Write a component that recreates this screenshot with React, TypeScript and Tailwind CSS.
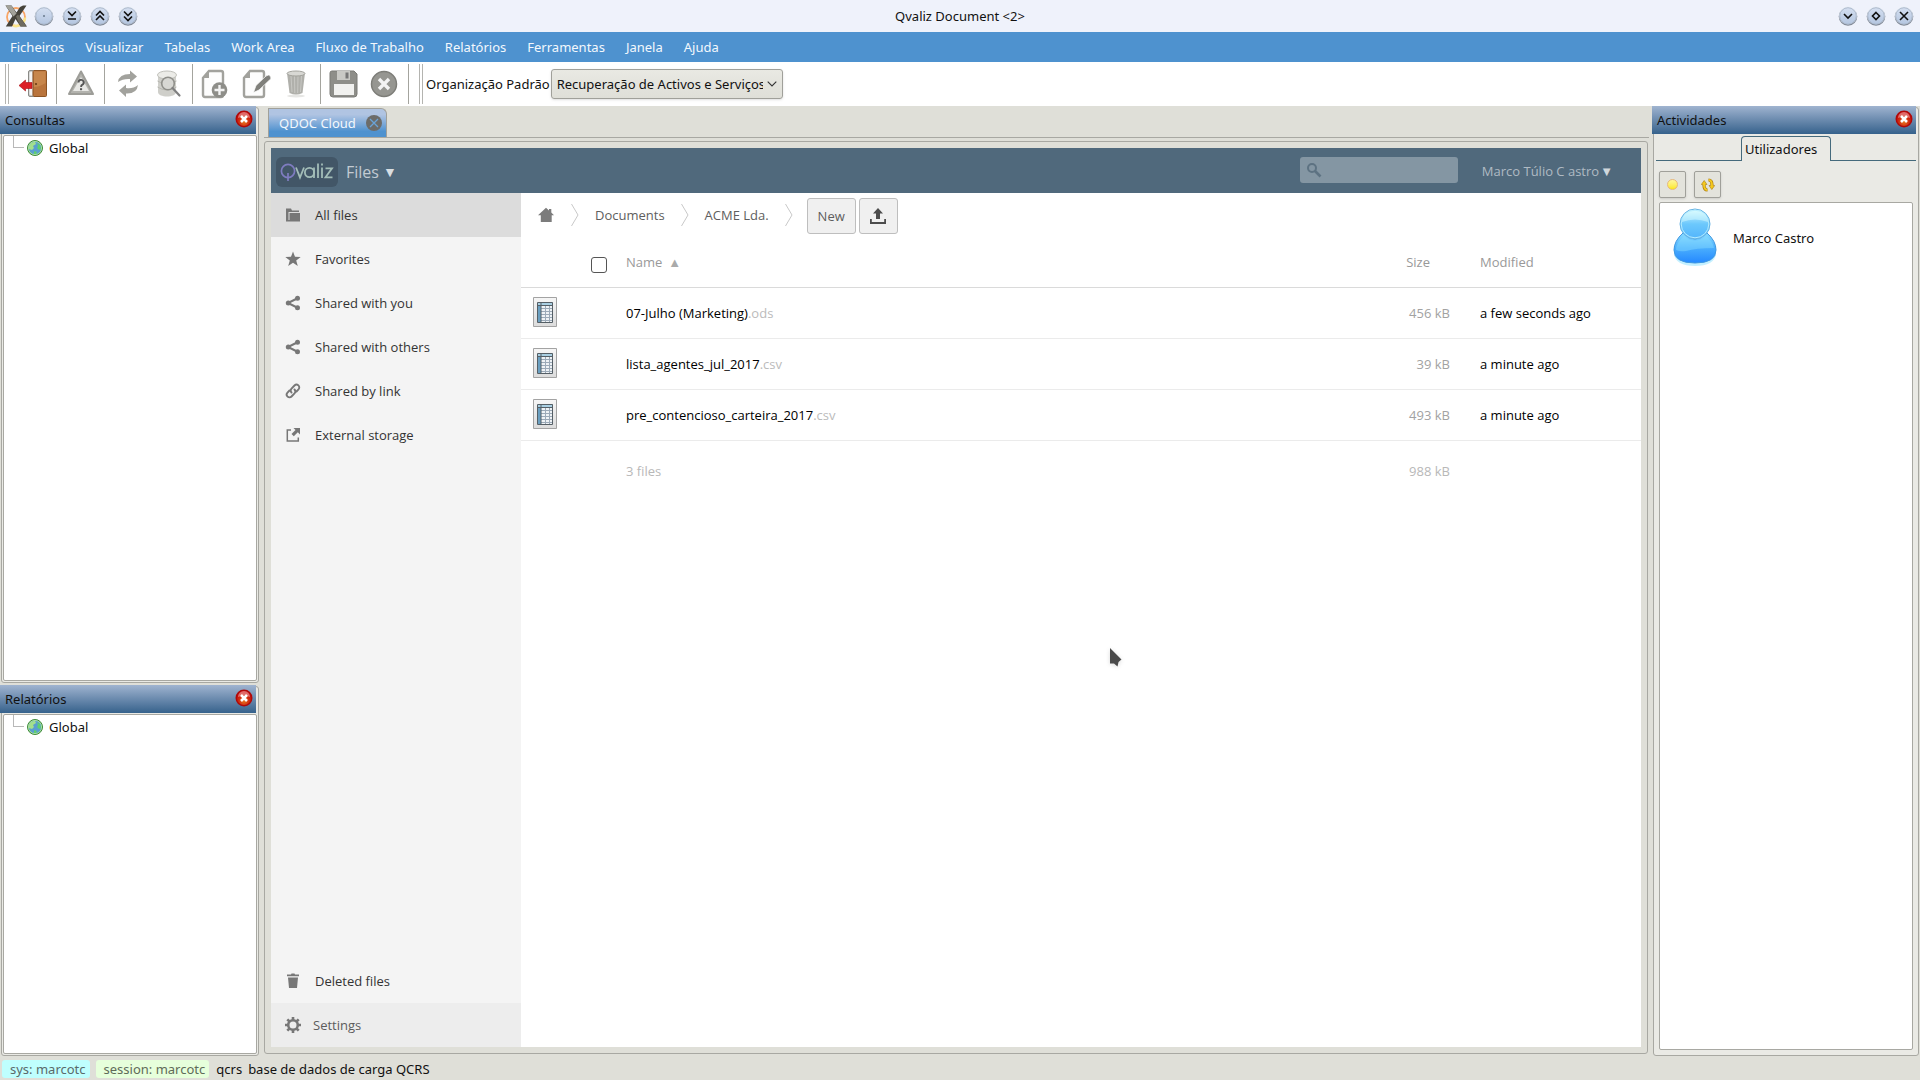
import React from 'react';

const dockFrame = 'rounded-[3px] border border-[#a8a8a2]';

function DockClose({ label }: { label: string }) {
  return (
    <button aria-label={label} className="h-4.5 w-4.5 self-start mt-1">
      <svg viewBox="0 0 18 18" className="h-full w-full">
        <defs>
          <radialGradient id="red" cx="50%" cy="70%" r="60%">
            <stop offset="0" stopColor="#e8781c" />
            <stop offset="0.6" stopColor="#cf2d10" />
            <stop offset="1" stopColor="#c80c0c" />
          </radialGradient>
        </defs>
        <circle cx="9" cy="9" r="8.5" fill="#b00808" />
        <circle cx="9" cy="9" r="7" fill="url(#red)" />
        <path d="M3 8a6 6 0 0 1 12 0q-6-3-12 0z" fill="#f0a8a8" opacity=".6" />
        <path d="M6 6l6 6M12 6l-6 6" stroke="#fff" strokeWidth="2.6" />
      </svg>
    </button>
  );
}

function DockHeader({ title }: { title: string }) {
  return (
    <header className="flex h-7 items-center justify-between bg-linear-to-b from-[#a0b4d0] to-[#36628c] pl-[5px] pr-[3px]">
      <h2>{title}</h2>
      <DockClose label={`Fechar ${title}`} />
    </header>
  );
}

function Globe() {
  return (
    <svg viewBox="0 0 16 16" className="h-4 w-4">
      <circle cx="8" cy="8" r="7.5" fill="#57a85a" stroke="#3e8a3a" />
      <circle cx="8" cy="8" r="6.4" fill="#5a9fd0" />
      <path d="M2 6q2-4 6-4.3L9 4 6 6l1 2-2 2-3-1z" fill="#a4e08c" />
      <path d="M10 3l3 2 1 4-2 1-2-2 1-2zM7 11l3 1-1 2.300H7z" fill="#5ed070" />
      <circle cx="8" cy="8" r="6.600" fill="none" stroke="#b8e8b0" strokeWidth=".8" />
    </svg>
  );
}

function TreeDock({ title, className }: { title: string; className: string }) {
  return (
    <section className={`flex flex-col ${className}`}>
      <div className="relative mr-[3px]"><DockHeader title={title} /></div>
      <div className="-mt-[27px] ml-px flex flex-1 flex-col rounded-[3px] border border-[#a8a8a2] bg-[#eaeae5] px-px pb-px pt-[27px]">
        <ul className="flex-1 rounded-[2px] border border-[#a8a8a2] bg-white pl-[9px]">
          <li className="flex h-6 items-center">
            <span className="mb-3 h-3 w-[11px] border-b border-l border-[#b8b8b8]" />
            <button className="ml-[3px] flex items-center gap-[6px]">
              <Globe />
              Global
            </button>
          </li>
        </ul>
      </div>
    </section>
  );
}

function WinButton({ label, children }: { label: string; children: React.ReactNode }) {
  return (
    <button aria-label={label} className="h-5 w-5">
      <svg viewBox="0 0 20 20" className="h-full w-full">
        <defs>
          <linearGradient id="win" x1="0" y1="0" x2="0" y2="1">
            <stop offset="0" stopColor="#d4dff0" />
            <stop offset="1" stopColor="#b4c6e0" />
          </linearGradient>
        </defs>
        <circle cx="10" cy="10.500" r="9.300" fill="#7f8794" />
        <circle cx="10" cy="9.500" r="9" fill="#e9eff8" />
        <circle cx="10" cy="10" r="8.300" fill="url(#win)" stroke="#98a6ba" strokeWidth=".7" />
        <g fill="none" stroke="#111" strokeWidth="1.600">{children}</g>
      </svg>
    </button>
  );
}

function Logo() {
  return (
    <svg viewBox="0 0 24 24" className="h-6 w-6">
      <circle cx="12" cy="13" r="9" fill="none" stroke="#f9a566" strokeWidth="1.800" />
      <path d="M9 21.500a9 9 0 0 0 12-8" stroke="#fbe58c" strokeWidth="2.600" fill="none" />
      <path d="M1.500 1.500h6l5 7 3.500-5.500 3-1.500h3.500L15.500 12l7.500 10.500h-6.500L11.500 15 8 22.500H1.800L8.500 12z" fill="#45423a" />
      <path d="M1.500 1.500h6l5 8-3 3z" fill="#a3a29a" />
      <path d="M12 12.500l2-2 8.500 12h-6z" fill="#6e6b60" />
    </svg>
  );
}

const ToolSep = () => <span className="h-10 w-px bg-[#a4a49e]" />;
const Handle = () => <span className="h-10 w-1 border-x border-[#b4b4b0]" />;

function Tool({ label, children }: { label: string; children: React.ReactNode }) {
  return (
    <button aria-label={label} className="h-8 w-8">
      <svg viewBox="0 0 32 32" className="h-full w-full">{children}</svg>
    </button>
  );
}

const menus = ['Ficheiros', 'Visualizar', 'Tabelas', 'Work Area', 'Fluxo de Trabalho', 'Relatórios', 'Ferramentas', 'Janela', 'Ajuda'];

function Toolbar() {
  return (
    <div className="flex h-11 items-center bg-white">
      <div className="flex items-center pl-[5px]">
        <Handle />
        <div className="flex w-[47px] justify-center">
          <Tool label="Sair">
            <path d="M11.500 4q0-1.500 1.500-1.500h5v26h-5q-1.500 0-1.500-1.500z" fill="#c4c5c2" stroke="#8a8a86" />
            <path d="M12.500 4.500l3-1v24l-3-1z" fill="#f4f4f4" />
            <path d="M16 3.500l1-1h11.500q1 0 1 1v24q0 1-1 1H17l-1-1z" fill="#b9743c" stroke="#8c5424" />
            <path d="M17 3.500h11.500V15q-6 4-11.500 4z" fill="#cb8b4f" opacity=".8" />
            <circle cx="19" cy="16" r="1.100" fill="#6c3b15" />
            <path d="M2 17.500L8.500 12v2.500h6.500v6H8.500V23z" fill="#dc2026" stroke="#a80f14" strokeWidth=".6" />
          </Tool>
        </div>
        <ToolSep />
        <div className="flex w-[47px] justify-center">
          <Tool label="Ajuda">
            <path d="M16 3.500L28 26H4z" fill="#b3b3ae" stroke="#9d9d98" strokeWidth="2" strokeLinejoin="round" />
            <path d="M16 9l8 14H8z" fill="#e8e8e5" />
            <path d="M13.500 14.500a2.600 2.600 0 1 1 3.600 2.400q-1 .5-1 2" fill="none" stroke="#555" strokeWidth="1.900" />
            <path d="M15 20.200h2.100v2H15z" fill="#555" />
          </Tool>
        </div>
        <ToolSep />
        <div className="flex w-[87px] justify-between pl-[7px] pr-2">
          <Tool label="Actualizar">
            <path d="M6 14q1-8 12-8V2.500l7 6-7 6V11q-7-.5-12 3z" fill="#a2a29d" />
            <path d="M26 17q-1 9-12 8.500V29l-7-6.500 7-6V20q7 1 12-3z" fill="#a2a29d" />
          </Tool>
          <Tool label="Pesquisar base de dados">
            <path d="M6 7v17c0 6 18 6 18 0V7z" fill="#cfcfca" />
            <ellipse cx="15" cy="7" rx="9.500" ry="4" fill="#ecece8" stroke="#c0c0ba" />
            <path d="M5.500 13q9 6 19 0M5.500 19q9 6 19 0" fill="none" stroke="#b8b8b2" />
            <circle cx="16" cy="15.500" r="6.300" fill="#d7d7d3" stroke="#8f8f8a" strokeWidth="1.600" />
            <path d="M20.500 20l7 7.500" stroke="#808080" strokeWidth="2.200" strokeLinecap="round" />
          </Tool>
        </div>
        <ToolSep />
        <div className="flex w-[127px] justify-between pl-[5px] pr-2">
          <Tool label="Novo">
            <path d="M11 3h12q2 0 2 2v22q0 2-2 2H7q-2 0-2-2V10z" fill="#fdfdfd" stroke="#a2a29d" strokeWidth="2.400" />
            <path d="M11 3v7H5z" fill="#a2a29d" />
            <circle cx="21.500" cy="22" r="7.800" fill="#8e8e89" />
            <path d="M21.500 17v10M16.500 22h10" stroke="#f3f3f3" strokeWidth="2.400" />
          </Tool>
          <Tool label="Editar">
            <path d="M11 3h12q2 0 2 2v22q0 2-2 2H7q-2 0-2-2V10z" fill="#fdfdfd" stroke="#a2a29d" strokeWidth="2.400" />
            <path d="M11 3v7H5z" fill="#a2a29d" />
            <path d="M14.500 24.500l2.500-7L27 8q3-2 4.500.5T30 12.500L20 22z" fill="#80807b" stroke="#fff" strokeWidth=".7" />
          </Tool>
          <Tool label="Eliminar">
            <ellipse cx="16" cy="28" rx="9" ry="1.500" fill="#e6e6e4" />
            <path d="M7 5h18l-2.500 20q-6.500 3-13 0z" fill="#b0b0ab" />
            <path d="M11 8l1 16M14.500 8l.3 17M18 8l-.3 17M21.500 8l-1 16" stroke="#c8c8c4" />
            <ellipse cx="16" cy="5.500" rx="9" ry="2.500" fill="#d8d8d4" stroke="#a4a49e" />
          </Tool>
        </div>
        <ToolSep />
        <div className="flex w-[87px] justify-between pl-[7px] pr-2">
          <Tool label="Guardar">
            <path d="M4 3h22l3 3v20q0 3-3 3H5q-3 0-3-3V5q0-2 2-2z" fill="#8e8e89" stroke="#7b7b76" />
            <path d="M9 3h13v9H9z" fill="#c9c9c5" />
            <path d="M17.500 4.500h3v6h-3z" fill="#777" />
            <path d="M6 16h20v11H6z" fill="#f1f1ef" />
          </Tool>
          <Tool label="Cancelar">
            <circle cx="16" cy="16" r="12.500" fill="#969691" stroke="#7d7d78" strokeWidth="1.500" />
            <path d="M11 11l10 10M21 11L11 21" stroke="#f3f3f3" strokeWidth="3.400" />
          </Tool>
        </div>
        <ToolSep />
      </div>
      <div className="ml-[10px] flex items-center">
        <Handle />
        <label htmlFor="org" className="ml-[3px] mr-px">Organização Padrão</label>
        <div className="relative">
          <select id="org" className="h-[30px] w-[232px] appearance-none rounded-[3px] border border-[#a0a09a] bg-linear-to-b from-[#e9e9e3] to-[#dfdfd8] pl-[5px] pr-[19px] shadow-sm">
            <option>Recuperação de Activos e Serviços</option>
          </select>
          <svg viewBox="0 0 10 6" className="pointer-events-none absolute right-[6px] top-3 h-[6px] w-[10px]">
            <path d="M.7.700L5 5 9.300.700" fill="none" stroke="#333" strokeWidth="1.100" />
          </svg>
        </div>
      </div>
    </div>
  );
}

const Share = () => (
  <>
    <path d="M13 3L3 8l10 5" fill="none" stroke="#777" strokeWidth="2" />
    <circle cx="12.500" cy="3.300" r="2.500" />
    <circle cx="3.300" cy="8" r="2.500" />
    <circle cx="12.500" cy="12.700" r="2.500" />
  </>
);

const navItems = [
  { label: 'All files', icon: <path d="M1 1.500h5l1 2h7v1.500H3.500V14H1zM4.500 6H15v8.500H4.500zM1 13h12v1.500H1z" />, on: true },
  { label: 'Favorites', icon: <path d="M8 .5l2 5.300 5.700.200-4.500 3.500L12.800 15 8 11.800 3.200 15l1.600-5.500L.3 6l5.700-.2z" /> },
  { label: 'Shared with you', icon: <Share /> },
  { label: 'Shared with others', icon: <Share /> },
  {
    label: 'Shared by link',
    icon: (
      <g fill="none" stroke="#777" strokeWidth="1.900" strokeLinecap="round">
        <path d="M6.500 9.500a2.800 2.800 0 0 1 0-3.800l3-3.200a2.700 2.700 0 0 1 4 3.800L11.500 8.500" />
        <path d="M9.500 6.500a2.800 2.800 0 0 1 0 3.800l-3 3.200a2.700 2.700 0 0 1-4-3.800L4.500 7.500" />
      </g>
    ),
  },
  {
    label: 'External storage',
    icon: (
      <>
        <path d="M6 3H2.300v11h11v-3.500" fill="none" stroke="#777" strokeWidth="1.500" />
        <path d="M8.500 1H15v6.500l-2.200-2.200-4 4L6.500 7l4-4z" />
      </>
    ),
  },
];

function NavIcon({ children }: { children: React.ReactNode }) {
  return <svg viewBox="0 0 16 16" className="h-4 w-4" fill="#777">{children}</svg>;
}

function SheetIcon() {
  return (
    <svg viewBox="0 0 24 30" className="mb-[2px] h-[30px] w-6">
      <defs>
        <linearGradient id="sheet" x1="0" y1="0" x2="0" y2="1">
          <stop offset="0" stopColor="#f6f6f6" />
          <stop offset="1" stopColor="#dcdcdc" />
        </linearGradient>
      </defs>
      <path d="M.5.500h23v29H.500z" fill="url(#sheet)" stroke="#a3a3a3" />
      <path d="M4.500 5.500h15v20h-15z" fill="#eef2f5" />
      <path d="M5 5h15v3H5z" fill="#a9cfe2" />
      <path d="M5 8h3v17H5z" fill="#6a9fc0" />
      <path d="M12.500 8v17M16.500 8v17M8 11.500h11M8 14.500h11M8 17.500h11M8 20.500h11M8 23.500h11" stroke="#8899aa" strokeWidth="1" opacity=".8" />
      <path d="M4.500 5.500h15v20h-15zM4.500 8.500h15M8 5.500v20" fill="none" stroke="#555f66" />
    </svg>
  );
}

const files = [
  { name: '07-Julho (Marketing)', ext: '.ods', size: '456 kB', when: 'a few seconds ago' },
  { name: 'lista_agentes_jul_2017', ext: '.csv', size: '39 kB', when: 'a minute ago' },
  { name: 'pre_contencioso_carteira_2017', ext: '.csv', size: '493 kB', when: 'a minute ago' },
];

const Chevron = () => (
  <svg viewBox="0 0 8 22" className="h-[22px] w-2">
    <path d="M.5 0L7 11 .5 22" fill="none" stroke="#c8c8c8" />
  </svg>
);

function FileTable() {
  return (
    <table className="w-full table-fixed border-collapse text-left">
      <colgroup>
        <col className="w-[70px]" />
        <col className="w-[35px]" />
        <col />
        <col className="w-20" />
        <col className="w-[191px]" />
      </colgroup>
      <thead>
        <tr className="h-[50px] border-b border-[#dadada] text-[#999]">
          <th />
          <th className="align-middle">
            <input type="checkbox" aria-label="Select all" className="mt-[6px] block h-4 w-4 appearance-none rounded-[3px] border border-[#555] bg-white" />
          </th>
          <th className="font-normal">
            <button className="flex items-center gap-[6px]">Name <span className="text-[13px] text-[#aaa]">▲</span></button>
          </th>
          <th className="pr-5 text-right font-normal">Size</th>
          <th className="pl-[30px] font-normal">Modified</th>
        </tr>
      </thead>
      <tbody>
        {files.map((f) => (
          <tr key={f.name} className="h-[51px] border-b border-[#ebebeb]">
            <td className="pl-3"><SheetIcon /></td>
            <td />
            <td><a href="#file" className="text-black">{f.name}<span className="text-[#bbb]">{f.ext}</span></a></td>
            <td className="text-right text-[#a2a2a2]">{f.size}</td>
            <td className="pl-[30px] text-black">{f.when}</td>
          </tr>
        ))}
      </tbody>
      <tfoot>
        <tr className="h-[62px] text-[#b8b8b8]">
          <td />
          <td />
          <td>3 files</td>
          <td className="text-right">988 kB</td>
          <td />
        </tr>
      </tfoot>
    </table>
  );
}

function Cloud() {
  return (
    <div className="flex flex-1 flex-col bg-white font-['Open_Sans',sans-serif]">
      <header className="flex h-[45px] items-center bg-[#50697c] pl-[5px] pr-7">
        <a href="#home" className="mt-[3px] flex h-[30px] w-[62px] items-center justify-center rounded-[6px] bg-[#425667]" aria-label="Qvaliz">
          <svg viewBox="0 0 54 24" className="h-6 w-[54px]">
            <circle cx="8" cy="11" r="6.600" fill="none" stroke="#7f7cc0" strokeWidth="1.700" />
            <path d="M8 13v8" stroke="#7f7cc0" strokeWidth="1.700" />
            <g fill="none" stroke="#a3bdb8" strokeWidth="1.800">
              <path d="M16 7.500l4 10 4-10" />
              <circle cx="29.500" cy="12.500" r="4.600" />
              <path d="M34 7.500v10.500M38 3.500v14.500M42 7.500V18M42 3.500v2M45.500 8.300h6.500l-6.500 9h7" />
            </g>
          </svg>
        </a>
        <button className="ml-2 mt-[2px] flex items-center gap-1 text-base text-[#c3cbd2]">Files <span className="text-sm text-[#d8dee2]">▼</span></button>
        <div className="relative mb-[2px] ml-auto">
          <input type="search" aria-label="Search" className="block h-[26px] w-[158px] rounded-[3px] bg-[#8496a3] pl-7" />
          <svg viewBox="0 0 16 16" className="pointer-events-none absolute left-[6px] top-[5px] h-4 w-4">
            <circle cx="6" cy="6" r="4" fill="none" stroke="#5d7282" strokeWidth="2" />
            <path d="M9 9l5.500 5.500" stroke="#5d7282" strokeWidth="2.600" />
          </svg>
        </div>
        <button className="ml-6 flex items-center gap-px text-[#afbac3]">Marco Túlio C astro <span className="text-[13px] text-[#d0d7dc]">▼</span></button>
      </header>
      <div className="flex flex-1">
        <nav className="flex w-[250px] flex-col bg-[#f4f4f4] text-[#333]">
          {navItems.map((n) => (
            <a key={n.label} href="#nav" className={`flex h-11 items-center gap-[14px] pl-[14px] ${n.on ? 'bg-[#dcdcdc]' : ''}`}>
              <NavIcon>{n.icon}</NavIcon>
              {n.label}
            </a>
          ))}
          <a href="#deleted" className="mt-auto flex h-11 items-center gap-[14px] pl-[14px]">
            <NavIcon><path d="M2 1.500h4l.5-1h3l.500 1h4v1.800H2zM3 4.500h10l-1 10.500H4z" /></NavIcon>
            Deleted files
          </a>
          <button className="flex h-11 items-center gap-3 bg-[#ededed] pl-[14px] text-[#5c5c5c]">
            <NavIcon>
              <circle cx="8" cy="8" r="4.800" fill="none" stroke="#777" strokeWidth="2.600" />
              <path d="M8 0v3M8 13v3M0 8h3M13 8h3M2.300 2.300l2.200 2.200M11.500 11.500l2.200 2.200M13.700 2.300l-2.200 2.200M4.500 11.500l-2.200 2.200" stroke="#777" strokeWidth="2.600" />
            </NavIcon>
            Settings
          </button>
        </nav>
        <main className="flex-1">
          <div className="flex h-11 items-center pl-[17px] text-[#5e5e5e]">
            <a href="#root" aria-label="Home">
              <svg viewBox="0 0 16 16" className="h-4 w-4" fill="#7c7c7c"><path d="M8 .8l3 2.600V2h2.300v3.500L16 8.200h-2.300V15H2.800V8.200H0z" /></svg>
            </a>
            <span className="ml-[17px] flex"><Chevron /></span>
            <a href="#documents" className="ml-4">Documents</a>
            <span className="ml-4 flex"><Chevron /></span>
            <a href="#acme" className="ml-4">ACME Lda.</a>
            <span className="ml-4 flex"><Chevron /></span>
            <button className="ml-[14px] mt-[2px] h-9 w-[49px] rounded-[3px] border border-[#bebebe] bg-[#f0f0f0]">New</button>
            <button aria-label="Upload" className="ml-[3px] mt-[2px] flex h-9 w-[39px] items-center justify-center rounded-[3px] border border-[#bebebe] bg-[#f0f0f0]">
              <svg viewBox="0 0 16 16" className="h-4 w-4" fill="#4c4c4c"><path d="M8 0l5 5.500h-3V11H6V5.500H3zM0 11h1.800v3h12.400v-3H16v5H0z" /></svg>
            </button>
          </div>
          <FileTable />
        </main>
      </div>
    </div>
  );
}

function Activities() {
  return (
    <aside className="mr-px flex w-[267px] flex-col">
      <div className="relative mr-[3px]"><DockHeader title="Actividades" /></div>
      <div className={`-mt-[27px] ml-px flex flex-1 flex-col bg-[#eaeae5] px-[2px] pt-[28px] ${dockFrame}`}>
        <div role="tablist" className="flex h-[25px] items-end">
          <span className="h-px w-[85px] bg-[#456a7c]" />
          <button role="tab" aria-selected="true" className="h-full w-[90px] rounded-t-[4px] border-x border-t border-[#456a7c] pl-[3px] text-left">Utilizadores</button>
          <span className="h-px flex-1 bg-[#456a7c]" />
        </div>
        <div className="mt-[10px] flex gap-2 pl-[3px]">
          <button aria-label="Estado" className="flex h-[27px] w-[27px] items-center justify-center rounded-[2px] border border-[#a0a09a] bg-[#e3e3dc] shadow-sm">
            <span className="h-[11px] w-[11px] rounded-full border border-[#e8b878] bg-linear-to-b from-[#fff79a] to-[#fce803]" />
          </button>
          <button aria-label="Actualizar" className="flex h-[27px] w-[27px] items-center justify-center rounded-[2px] border border-[#a0a09a] bg-[#e3e3dc] shadow-sm">
            <svg viewBox="0 0 14 14" className="h-[14px] w-[14px]" fill="none">
              <path d="M6.500 12q-3.500 0-3.500-5M7.500 2q3.500 0 3.500 5" stroke="#a87a10" strokeWidth="3.200" />
              <path d="M6 6.500H.3L3.200 2.500zM8 7.500h5.700L10.800 11.500z" fill="#f4c81c" stroke="#a87a10" strokeWidth=".6" />
              <path d="M6.300 12Q3 12 3 6M7.700 2Q11 2 11 8" stroke="#f4c81c" strokeWidth="2" />
            </svg>
          </button>
        </div>
        <ul className="mx-[3px] mb-[5px] mt-1 flex-1 rounded-[2px] border border-[#a8a8a2] bg-white">
          <li className="flex items-center gap-4 pl-[13px] pt-[5px]">
            <svg viewBox="0 0 44 60" className="h-[60px] w-11">
              <defs>
                <linearGradient id="head" x1="0" y1="0" x2="0" y2="1">
                  <stop offset="0" stopColor="#d9fbff" />
                  <stop offset=".5" stopColor="#6cc8fc" />
                  <stop offset="1" stopColor="#52b4fc" />
                </linearGradient>
                <linearGradient id="body" x1="0" y1="0" x2="0" y2="1">
                  <stop offset="0" stopColor="#8adcff" />
                  <stop offset=".5" stopColor="#4aaefd" />
                  <stop offset="1" stopColor="#2488ff" />
                </linearGradient>
              </defs>
              <path d="M9 28q13 10 26 0 8 8 8 16 0 14-21 14T1 44q0-8 8-16z" fill="#c4f0ff" />
              <path d="M10 25q12 12 24 0 9 8 9 17 0 13-21 13T1 42q0-9 9-17z" fill="url(#body)" stroke="#3f97e0" />
              <path d="M3 42q0-7 8-14 11 9 22 0 7 6 8 12-18 0-28 3-6 1-10-1z" fill="#8fe0ff" opacity=".4" />
              <circle cx="22" cy="16" r="15" fill="url(#head)" stroke="#68b4e4" />
              <circle cx="22" cy="16" r="13.800" fill="none" stroke="#b4ecff" strokeWidth="1" />
              <path d="M9 14q13-5 26 0-1-11-13-11T9 14z" fill="#e0ffff" opacity=".45" />
            </svg>
            Marco Castro
          </li>
        </ul>
      </div>
    </aside>
  );
}

export default function App() {
  return (
    <div className="relative flex min-h-screen flex-col bg-[#dfdfd8] font-['Noto_Sans',sans-serif] text-[13px] leading-[18px] text-[#111]">
      <header className="grid h-8 grid-cols-[1fr_auto_1fr] items-center bg-[#eff2fb] px-[6px]">
        <div className="flex items-center">
          <span className="-ml-[2px]"><Logo /></span>
          <div className="ml-[6px] flex gap-2">
            <WinButton label="Menu"><path d="M9.300 10h1.400" stroke="#456" /></WinButton>
            <WinButton label="Manter abaixo"><path d="M6 5.500l4 4 4-4M6 13h8" /></WinButton>
            <WinButton label="Manter acima"><path d="M6 9.500l4-4 4 4M6 14l4-4 4 4" /></WinButton>
            <WinButton label="Enrolar"><path d="M6 5.500l4 4 4-4M6 10.500l4 4 4-4" /></WinButton>
          </div>
        </div>
        <h1>Qvaliz Document &lt;2&gt;</h1>
        <div className="flex justify-end gap-2">
          <WinButton label="Minimizar"><path d="M6 8l4 4 4-4" /></WinButton>
          <WinButton label="Maximizar"><path d="M10 6.500l3.500 3.500-3.500 3.500L6.500 10z" /></WinButton>
          <WinButton label="Fechar"><path d="M6 6l8 8M14 6l-8 8" /></WinButton>
        </div>
      </header>
      <nav className="flex h-[30px] items-center gap-[21px] bg-[#4e92cf] pl-[10px] text-[#f3f8fd]">
        {menus.map((m) => (
          <button key={m}>{m}</button>
        ))}
      </nav>
      <Toolbar />
      <div className="flex flex-1">
        <div className="mr-[5px] flex w-[259px] flex-col gap-[2px]">
          <TreeDock title="Consultas" className="flex-[577]" />
          <TreeDock title="Relatórios" className="flex-[371]" />
        </div>
        <div className="mb-[2px] flex min-w-0 flex-1 flex-col pt-[2px]">
          <div role="tablist" className="mr-[-1px] flex border-b border-[#a8a8a2] pl-1">
            <div className="flex h-[29px] w-[119px] items-center justify-between rounded-tr-[6px] border border-b-0 border-[#a0a09a] bg-linear-to-b from-[#b0c4e2] from-20% to-[#4e92cf] to-80% pl-[10px] pr-1 text-[#f3f8fd]">
              <button role="tab" aria-selected="true">QDOC Cloud</button>
              <button aria-label="Fechar separador">
                <svg viewBox="0 0 16 16" className="h-4 w-4">
                  <circle cx="8" cy="8" r="8" fill="#6c6c6a" />
                  <path d="M4 4l8 8M12 4l-8 8" stroke="#6aa4d8" strokeWidth="1.300" />
                </svg>
              </button>
            </div>
          </div>
          <div className={`mt-[3px] flex flex-1 p-[6px] ${dockFrame}`}>
            <Cloud />
          </div>
        </div>
        <div className="ml-1 flex"><Activities /></div>
      </div>
      <footer className="flex h-6 items-center pl-[2px] pt-[2px]">
        <span className="rounded-[3px] bg-[#bffffe] pl-2 pr-1 text-[#5a6a6a]">sys: marcotc</span>
        <span className="ml-[6px] rounded-[3px] bg-[#e6ffdb] pl-2 pr-1 text-[#5f6b58]">session: marcotc</span>
        <span className="ml-[7px]">qcrs</span>
        <span className="ml-[6px]">base de dados de carga QCRS</span>
      </footer>
      <svg viewBox="0 0 14 22" className="pointer-events-none absolute left-[1109px] top-[647px] h-[22px] w-[14px] drop-shadow-sm">
        <path d="M1 1v15.500h4l3.500 3 1-4.500 3-2.500z" fill="#4a4a4a" />
      </svg>
    </div>
  );
}
